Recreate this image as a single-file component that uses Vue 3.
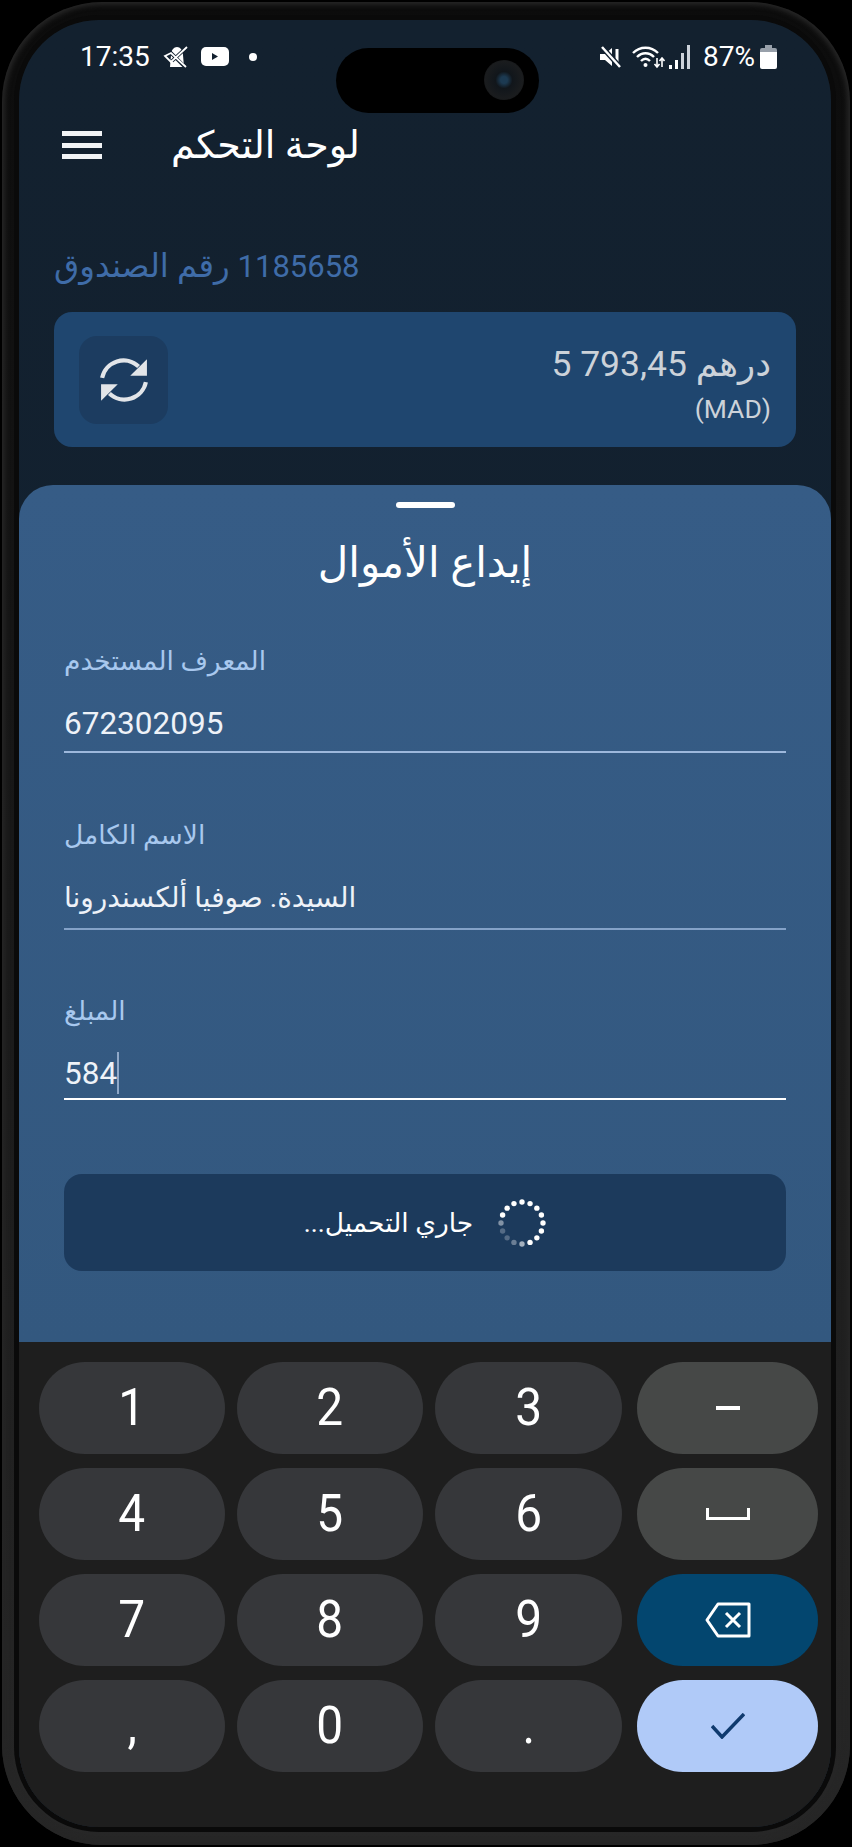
<script setup>
const keys = [
  { t: '1' }, { t: '2' }, { t: '3' }, { icon: 'minus', c: 'fn' },
  { t: '4' }, { t: '5' }, { t: '6' }, { icon: 'space', c: 'fn' },
  { t: '7' }, { t: '8' }, { t: '9' }, { icon: 'back', c: 'del' },
  { t: ',' }, { t: '0' }, { t: '.' }, { icon: 'check', c: 'ok' },
]
const fade = { 8: 0.6, 9: 0.35, 10: 0.25, 11: 0.25, 12: 0.45 }
const dots = Array.from({ length: 16 }, (_, i) => {
  const a = (i * Math.PI) / 8
  return {
    x: 24 + 21 * Math.sin(a),
    y: 24 - 21 * Math.cos(a),
    o: fade[i] ?? 1,
  }
})
</script>

<template>
  <div class="phone">
    <div class="bezel">
      <div class="screen">
        <div class="island"><span class="lens"></span></div>

        <div class="status">
          <div class="status-side">
            <span class="clock">17:35</span>
            <svg class="ic-notif" width="26" height="22" viewBox="0 0 26 22">
              <path d="M7 21l1-12c0-5 3-8 6-8s6 3 6 8l1 12z" fill="#fff"/>
              <path d="M24 1L9 15M2 10l6-3 14 14" fill="none" stroke="#12202f" stroke-width="3.600"/>
              <path d="M24 1L8 16 2 10l6-3 15 14" fill="none" stroke="#fff" stroke-width="1.800"/>
            </svg>
            <svg class="ic-yt" width="28" height="19" viewBox="0 0 28 19">
              <rect width="28" height="19" rx="5" fill="#fff"/>
              <path d="M11 6l6 3.500-6 3.500z" fill="#12202f"/>
            </svg>
            <span class="dot"></span>
          </div>
          <div class="status-side">
            <svg width="23" height="22" viewBox="0 0 23 22">
              <path d="M1 8h5l7-6v18l-7-6H1z" fill="#fff"/>
              <path d="M18 3v15" stroke="#fff" stroke-width="3" fill="none"/>
              <path d="M3 1l18 20" stroke="#12202f" stroke-width="5" fill="none"/>
              <path d="M3 1l18 20" stroke="#fff" stroke-width="2.500" fill="none"/>
            </svg>
            <svg class="ic-wifi" width="33" height="24" viewBox="0 0 33 24">
              <path d="M1 8c7-7 18-7 25 0M5 12c5-5 12-5 17 0M9 16c3-3 6-3 9 0" fill="none" stroke="#fff" stroke-width="2.400"/>
              <circle cx="13.500" cy="20" r="2" fill="#fff"/>
              <path d="M25 13v9M22.500 19l2.500 3 2.500-3M30 22v-9M27.500 16l2.500-3 2.500 3" fill="none" stroke="#fff" stroke-width="1.600"/>
            </svg>
            <svg class="ic-signal" width="22" height="24" viewBox="0 0 22 24">
              <rect x="0" y="20" width="3" height="4" fill="#fff"/>
              <rect x="6" y="15" width="3" height="9" fill="#fff"/>
              <rect x="12" y="8" width="3" height="16" fill="#ccd2da"/>
              <rect x="18" y="0" width="3" height="24" fill="#ccd2da"/>
            </svg>
            <span class="pct">87%</span>
            <svg class="ic-batt" width="17" height="24" viewBox="0 0 17 24">
              <path d="M5 0h7v3h3a2 2 0 0 1 2 2v3H0V5a2 2 0 0 1 2-2h3z" fill="#98a0aa"/>
              <path d="M0 7h17v15a2 2 0 0 1-2 2H2a2 2 0 0 1-2-2z" fill="#fff"/>
            </svg>
          </div>
        </div>

        <header class="appbar">
          <div class="burger"><i></i><i></i><i></i></div>
          <h1 class="title" dir="rtl">لوحة التحكم</h1>
        </header>

        <div class="main">
          <div class="box-no" dir="rtl"><bdi class="box-num">1185658</bdi> <span class="box-txt">رقم الصندوق</span></div>
          <div class="card">
            <div class="refresh">
              <svg width="50" height="50" viewBox="0 0 48 48">
                <path d="M3 22A21 21 0 0 1 38 11" fill="none" stroke="#e2e5e9" stroke-width="4"/>
                <path d="M46 4V20H30Z" fill="#e2e5e9"/>
                <path d="M45 26A21 21 0 0 1 10 37" fill="none" stroke="#e2e5e9" stroke-width="4"/>
                <path d="M2 44V28H18Z" fill="#e2e5e9"/>
              </svg>
            </div>
            <div class="balance">
              <div class="amount" dir="rtl">درهم <bdi dir="ltr">5 793,45</bdi></div>
              <div class="cur">(MAD)</div>
            </div>
          </div>
        </div>

        <section class="sheet">
          <div class="handle"></div>
          <h2 class="sheet-title" dir="rtl">إيداع الأموال</h2>

          <div class="field f1">
            <label class="lbl" dir="rtl">المعرف المستخدم</label>
            <div class="val">672302095</div>
          </div>
          <div class="field f2">
            <label class="lbl" dir="rtl">الاسم الكامل</label>
            <div class="val val-ar" dir="rtl">السيدة. صوفيا ألكسندرونا</div>
          </div>
          <div class="field f3">
            <label class="lbl" dir="rtl">المبلغ</label>
            <div class="val">584<span class="caret"></span></div>
          </div>

          <button class="submit">
            <span class="loading" dir="rtl">جاري التحميل...</span>
            <svg class="spin" width="48" height="48" viewBox="0 0 48 48">
              <circle v-for="(d, i) in dots" :key="i" :cx="d.x" :cy="d.y" r="2.700" fill="#fff" :opacity="d.o"/>
            </svg>
          </button>
        </section>

        <div class="keyboard">
          <div v-for="(k, i) in keys" :key="i" class="key" :class="k.c">
            <span v-if="k.t" class="digit">{{ k.t }}</span>
            <span v-else-if="k.icon === 'minus'" class="g-minus"></span>
            <svg v-else-if="k.icon === 'space'" width="44" height="12" viewBox="0 0 44 12">
              <path d="M1.500 0v10.500h41V0" fill="none" stroke="#fff" stroke-width="3"/>
            </svg>
            <svg v-else-if="k.icon === 'back'" width="46" height="36" viewBox="0 0 46 36">
              <path d="M13 2h31v32H13L2 18z" fill="none" stroke="#fff" stroke-width="3" stroke-linejoin="round"/>
              <path d="M21 11l14 14M35 11L21 25" fill="none" stroke="#fff" stroke-width="3"/>
            </svg>
            <svg v-else width="34" height="26" viewBox="0 0 34 26">
              <path d="M1 13l10 11L33 1" fill="none" stroke="#0f3a6e" stroke-width="3.500"/>
            </svg>
          </div>
        </div>
      </div>
    </div>
  </div>
</template>

<style>
html, body { margin: 0; background: #000; }
</style>

<style scoped>
.phone {
  width: 852px;
  height: 1847px;
  box-sizing: border-box;
  padding: 2px;
  background: #000;
  font-family: Roboto, "DejaVu Sans", sans-serif;
  overflow: hidden;
}
.bezel {
  height: 100%;
  box-sizing: border-box;
  padding: 18px 19px 18px 17px;
  border-radius: 100px;
  background: linear-gradient(180deg, #0c0c0c 0%, #1c1c1c 60%, #272727 100%);
  box-shadow: inset 0 0 5px 3px #262626;
}
.screen {
  position: relative;
  height: 100%;
  display: flex;
  flex-direction: column;
  border-radius: 80px;
  overflow: hidden;
  background: linear-gradient(180deg, #13212f 0%, #112030 100%);
  box-shadow: 0 0 0 5px #0a0a0a;
}
.island {
  position: absolute;
  left: 317px;
  top: 28px;
  width: 203px;
  height: 65px;
  border-radius: 33px;
  background: #000;
}
.lens {
  position: absolute;
  right: 15px;
  top: 12px;
  width: 40px;
  height: 40px;
  border-radius: 50%;
  background: radial-gradient(circle at 50% 50%, #1c3a52 0 12%, #11161b 30%, #1a1c1e 65%, #0a0a0a 100%);
}
.status {
  height: 60px;
  flex: none;
  box-sizing: border-box;
  display: flex;
  justify-content: space-between;
  align-items: center;
  padding: 13px 54px 0 61px;
  color: #fff;
}
.status-side {
  display: flex;
  align-items: center;
}
.clock, .pct {
  font-size: 28px;
  line-height: 32px;
}
.ic-notif { margin-left: 13px; }
.ic-yt { margin-left: 12px; }
.dot {
  width: 8px;
  height: 8px;
  border-radius: 50%;
  background: #fff;
  margin: 0 0 0 20px;
}
.ic-wifi { margin-left: 10px; }
.ic-signal { margin-left: 4px; }
.pct { margin-left: 12px; }
.ic-batt { margin-left: 5px; }

.appbar {
  flex: none;
  height: 92px;
  margin-top: 19px;
  display: flex;
  align-items: center;
  padding-left: 43px;
}
.burger {
  width: 40px;
  height: 28px;
  display: flex;
  flex-direction: column;
  justify-content: space-between;
}
.burger i {
  display: block;
  height: 5px;
  background: #f2f4f6;
}
.title {
  margin: 0 0 0 69px;
  width: max-content;
  white-space: nowrap;
  font-size: 38px;
  line-height: 60px;
  font-weight: 400;
  color: #fff;
}
.main {
  flex: none;
  padding: 55px 35px 0;
}
.box-no {
  width: max-content;
  white-space: nowrap;
  font-size: 31px;
  line-height: 40px;
  color: #3f6ca8;
}
.box-txt {
  font-size: 32.500px;
}
.card {
  margin-top: 25px;
  height: 135px;
  box-sizing: border-box;
  padding: 23px 25px;
  border-radius: 18px;
  background: #1f466f;
  display: flex;
  justify-content: space-between;
  align-items: center;
}
.refresh {
  width: 89px;
  height: 88px;
  border-radius: 18px;
  background: #1c3c60;
  display: flex;
  align-items: center;
  justify-content: center;
}
.balance {
  text-align: right;
  color: #ccd2d9;
  padding-top: 8px;
}
.amount {
  font-size: 35.500px;
  line-height: 44px;
}
.cur {
  font-size: 26.500px;
  line-height: 32px;
  margin-top: 7px;
}
.sheet {
  flex: 1;
  margin-top: 38px;
  min-height: 0;
  padding: 17px 45px 0;
  border-radius: 34px 34px 0 0;
  background: linear-gradient(180deg, #365c86 0%, #33587f 100%);
}
.handle {
  width: 59px;
  height: 6px;
  border-radius: 3px;
  background: #fff;
  margin: 0 auto;
}
.sheet-title {
  margin: 25px 0 0;
  text-align: center;
  font-size: 42px;
  line-height: 60px;
  font-weight: 400;
  color: #fff;
}
.field {
  border-bottom: 2px solid #9db8dc;
}
.lbl {
  display: block;
  width: max-content;
  font-size: 26.500px;
  line-height: 40px;
  color: #a8c8ee;
}
.val {
  position: relative;
  margin-top: 21px;
  width: max-content;
  font-size: 31.500px;
  line-height: 44px;
  color: #eef2f8;
}
.val-ar {
  font-size: 28px;
}
.f1 { margin-top: 48px; padding-bottom: 5px; }
.f2 { margin-top: 62px; padding-bottom: 8px; border-bottom-color: #84a2c8; }
.f3 { margin-top: 61px; padding-bottom: 2px; border-bottom-color: #fff; }
.caret {
  position: absolute;
  left: 100%;
  top: 0;
  width: 2px;
  height: 42px;
  background: #8fa8c8;
}
.submit {
  display: flex;
  width: 100%;
  height: 97px;
  margin-top: 74px;
  padding: 0;
  border: 0;
  border-radius: 18px;
  background: #1c3a5c;
  color: #fff;
  align-items: center;
  justify-content: center;
  gap: 25px;
  font-family: inherit;
}
.loading {
  font-size: 26.500px;
  line-height: 40px;
}
.keyboard {
  flex: none;
  height: 485px;
  box-sizing: border-box;
  padding: 20px 0 0 20px;
  background: #1e1e1e;
  display: grid;
  grid-template-columns: 186px 186px 187px 184px;
  grid-auto-rows: 92px;
  column-gap: 12px;
  row-gap: 14px;
}
.key:nth-child(4n) { margin-left: 3px; }
.key {
  border-radius: 46px;
  background: #36373a;
  display: flex;
  align-items: center;
  justify-content: center;
  color: #fff;
}
.digit {
  font-size: 52px;
  line-height: 1;
  transform: scaleX(0.92);
}
.fn { background: #464847; }
.del { background: #03466f; }
.ok { background: #b0caf8; }
.g-minus {
  width: 24px;
  height: 4px;
  background: #fff;
}
</style>
